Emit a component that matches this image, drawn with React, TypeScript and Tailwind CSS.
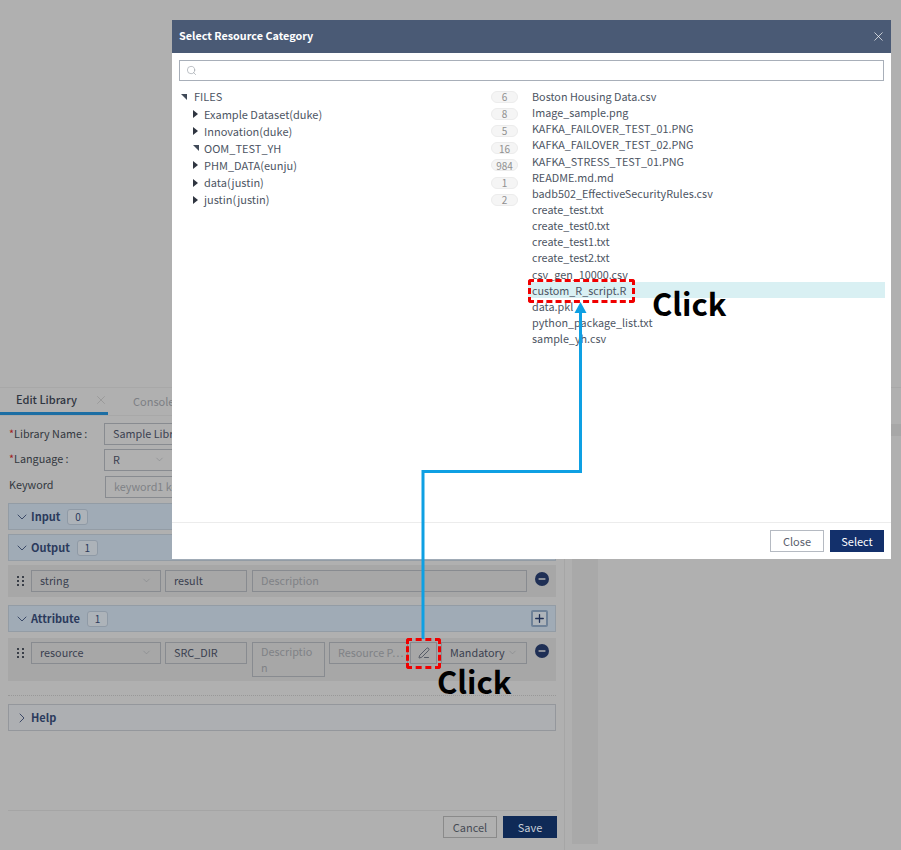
import { ChevronDown, ChevronRight, Minus, PenLine, Plus, Search, X } from 'lucide-react';

const TREE = [
  { name: 'FILES', count: '6', open: true, depth: 0 },
  { name: 'Example Dataset(duke)', count: '8', open: false, depth: 1 },
  { name: 'Innovation(duke)', count: '5', open: false, depth: 1 },
  { name: 'OOM_TEST_YH', count: '16', open: true, depth: 1 },
  { name: 'PHM_DATA(eunju)', count: '984', open: false, depth: 1 },
  { name: 'data(justin)', count: '1', open: false, depth: 1 },
  { name: 'justin(justin)', count: '2', open: false, depth: 1 },
];

const FILES = [
  'Boston Housing Data.csv',
  'Image_sample.png',
  'KAFKA_FAILOVER_TEST_01.PNG',
  'KAFKA_FAILOVER_TEST_02.PNG',
  'KAFKA_STRESS_TEST_01.PNG',
  'README.md.md',
  'badb502_EffectiveSecurityRules.csv',
  'create_test.txt',
  'create_test0.txt',
  'create_test1.txt',
  'create_test2.txt',
  'csv_gen_10000.csv',
  'custom_R_script.R',
  'data.pkl',
  'python_package_list.txt',
  'sample_yh.csv',
];

function Field({
  children,
  className = '',
  muted = false,
}: {
  children?: React.ReactNode;
  className?: string;
  muted?: boolean;
}) {
  return (
    <div
      className={`flex h-[22px] shrink-0 items-center overflow-hidden whitespace-nowrap border border-[#888b90] px-[8px] pb-[1px] text-[10.8px] ${
        muted ? 'text-[#7f8286]' : 'text-[#3b4150]'
      } ${className}`}
    >
      {children}
    </div>
  );
}

function SelectBox({ label, className = '' }: { label: string; className?: string }) {
  return (
    <Field className={`justify-between ${className}`}>
      <span>{label}</span>
      <ChevronDown size={11} strokeWidth={1.2} className="text-[#7f8286]" />
    </Field>
  );
}

function Section({
  title,
  count,
  open = true,
  withAdd = false,
}: {
  title: string;
  count?: string;
  open?: boolean;
  withAdd?: boolean;
}) {
  return (
    <div
      className={`flex h-[27px] items-center border pl-[5px] pr-[7px] ${
        open ? 'border-[#939ca5] bg-[#a0abb6]' : 'border-[#94979c] bg-[#adafb2]'
      }`}
    >
      {open ? (
        <ChevronDown size={16} strokeWidth={1.3} className="text-[#2b3a5c]" />
      ) : (
        <ChevronRight size={16} strokeWidth={1.3} className="text-[#2b3a5c]" />
      )}
      <span className="ml-[1px] text-[11px] font-bold text-[#2b3a5c]">{title}</span>
      {count && (
        <span className="ml-[7px] flex h-[16px] w-[21px] items-center justify-center rounded-[3px] border border-[#8f9aa6] bg-[#adb3b9] text-[10px] text-[#2b3a5c]">
          {count}
        </span>
      )}
      {withAdd && (
        <span className="ml-auto flex h-[17px] w-[17px] items-center justify-center rounded-[2px] border-2 border-[#6f8298] bg-[#aeb4ba]">
          <Plus size={13} strokeWidth={2.4} className="text-[#1f2f55]" />
        </span>
      )}
    </div>
  );
}

function RemoveButton() {
  return (
    <span className="flex h-[14px] w-[14px] shrink-0 items-center justify-center rounded-full bg-[#1f2f55]">
      <Minus size={10} strokeWidth={3.4} className="text-[#b0b0b0]" />
    </span>
  );
}

// Six-dot drag handle
function Grip({ className = '' }: { className?: string }) {
  return (
    <svg width="7" height="10" viewBox="0 0 7 10" className={`shrink-0 ${className}`} fill="#3a3f48">
      <rect x="0" y="0" width="2" height="2" />
      <rect x="5" y="0" width="2" height="2" />
      <rect x="0" y="4" width="2" height="2" />
      <rect x="5" y="4" width="2" height="2" />
      <rect x="0" y="8" width="2" height="2" />
      <rect x="5" y="8" width="2" height="2" />
    </svg>
  );
}

function ClickLabel({ className }: { className: string }) {
  return (
    <span className={`absolute text-[31px] font-bold leading-none text-black ${className}`}>Click</span>
  );
}

export default function App() {
  return (
    <div
      className="relative h-[850px] w-[901px] overflow-hidden bg-[#b0b0b0]"
      style={{ fontFamily: '"Noto Sans CJK KR", "Noto Sans", sans-serif' }}
    >
      {/* Dimmed page behind the dialog */}
      <div className="flex h-full pt-[387px]">
        <div className="flex h-[463px] w-[565px] shrink-0 flex-col border-r border-[#a6a6a6]">
          <div className="flex h-[29px] shrink-0 items-end border-b border-t border-[#a8a8a8] text-[11px]">
            <div className="flex h-[28px] w-[108px] items-center whitespace-nowrap border-b-[3px] border-[#1c6ea4] pl-[16px] font-medium text-[#2f3540]">
              Edit Library
              <X size={14} strokeWidth={1.1} className="ml-[17px] text-[#8e8e8e]" />
            </div>
            <div className="flex h-[28px] items-center pl-[25px] text-[#7c7f84]">Console</div>
          </div>

          <div className="flex flex-col pl-[9px] pr-[7px] pt-[7px] text-[10.8px] text-[#33383f]">
            <div className="flex h-[21px] items-center">
              <span className="w-[95px]">
                <span className="text-[#a02020]">*</span>Library Name :
              </span>
              <Field className="w-[200px]">Sample Library</Field>
            </div>
            <div className="mt-[5px] flex h-[21px] items-center">
              <span className="w-[95px] pb-[2px]">
                <span className="text-[#a02020]">*</span>Language :
              </span>
              <SelectBox label="R" className="w-[70px]" />
            </div>
            <div className="mt-[6px] flex h-[21px] items-center">
              <span className="w-[96px] pb-[4px]">Keyword</span>
              <Field muted className="w-[200px]">
                keyword1 keyword2
              </Field>
            </div>
          </div>

          <div className="flex flex-col px-[8px] pt-[6px]">
            <Section title="Input" count="0" />
            <div className="mt-[4px]">
              <Section title="Output" count="1" />
            </div>
            <div className="mt-[4px] flex h-[32px] items-center bg-[#a7a7a7] pl-[9px] pr-[9px]">
              <Grip className="mr-[7px]" />
              <SelectBox label="string" className="w-[130px]" />
              <Field className="ml-[4px] w-[82px]">result</Field>
              <Field muted className="ml-[5px] w-[275px]">
                Description
              </Field>
              <span className="-mt-[5px] ml-[8px]">
                <RemoveButton />
              </span>
            </div>

            <div className="mt-[8px]">
              <Section title="Attribute" count="1" withAdd />
            </div>
            <div className="mt-[6px] flex h-[43px] items-start bg-[#a7a7a7] pl-[9px] pr-[9px] pt-[4px]">
              <Grip className="mr-[7px] mt-[6px]" />
              <SelectBox label="resource" className="w-[130px]" />
              <Field className="ml-[4px] w-[82px]">SRC_DIR</Field>
              <Field muted className="ml-[5px] !h-[35px] w-[73px] !items-start !whitespace-normal break-all leading-[16px]">
                Description
              </Field>
              <Field muted className="ml-[4px] w-[79px] !pr-0">
                Resource P⋯
              </Field>
              <Field className="ml-[2px] w-[27px] justify-center !px-0">
                <PenLine size={12} strokeWidth={1.5} />
              </Field>
              <SelectBox label="Mandatory" className="ml-[4px] w-[86px]" />
              <span className="ml-[8px] mt-[2px]">
                <RemoveButton />
              </span>
            </div>

            <div className="mt-[14px] border-t border-dotted border-[#989898]" />
            <div className="mt-[8px]">
              <Section title="Help" open={false} />
            </div>
          </div>

          <div className="ml-[8px] mr-[7px] mt-[79px] flex justify-end gap-[6px] border-t border-[#a5a5a5] pt-[5px]">
            <button className="h-[22px] w-[54px] border border-[#8a8a8a] text-[11px] text-[#474c55]">Cancel</button>
            <button className="h-[22px] w-[54px] bg-[#0f2a57] text-[11px] text-[#c9ced6]">Save</button>
          </div>
        </div>
        <div className="ml-[7px] h-[457px] w-[26px] shrink-0 bg-[#a9a9a9]" />
        <div className="flex-1 border-t border-[#a8a8a8] pt-[36px]">
          <div className="h-[12px] bg-[#a7a7a7]" />
        </div>
      </div>

      {/* Select Resource Category dialog */}
      <div className="absolute left-[172px] top-[20px] flex h-[539px] w-[719px] flex-col bg-white">
        <div className="flex h-[33px] shrink-0 items-center justify-between bg-[#4a5a75] pl-[7px] pr-[5px]">
          <span className="pb-[2px] text-[10.8px] font-bold text-white">Select Resource Category</span>
          <X size={15} strokeWidth={1.1} className="text-white" />
        </div>

        <div className="mx-[7px] mt-[7px] flex h-[21px] items-center border border-[#a8afb9] pl-[6px]">
          <Search size={11} strokeWidth={1.4} className="text-[#9aa0a8]" />
        </div>

        <div className="flex min-h-0 flex-1 text-[#4d5563]">
          <div className="mt-[7px] w-[346px] shrink-0 pl-[9px] text-[11px]">
            {TREE.map((item) => (
              <div key={item.name} className="flex h-[17.2px] items-center">
                <span className={`flex justify-start ${item.depth ? 'ml-[12px] w-[11px]' : 'w-[13px]'}`}>
                  {item.open ? (
                    <span className="h-0 w-0 border-l-[6px] border-t-[6px] border-l-transparent border-t-[#414a58]" />
                  ) : (
                    <span className="h-0 w-0 border-y-[4.5px] border-l-[5px] border-y-transparent border-l-[#2f3540]" />
                  )}
                </span>
                <span className="whitespace-nowrap">{item.name}</span>
                <span className="ml-auto flex h-[12px] w-[27px] items-center justify-center rounded-full border border-[#ececec] bg-[#f5f5f5] text-[10px] text-[#909090]">
                  {item.count}
                </span>
              </div>
            ))}
          </div>

          <div className="ml-[10px] mt-[7px] flex-1 pr-[6px] text-[10.8px]">
            {FILES.map((file) => (
              <div
                key={file}
                className={`flex h-[16.15px] items-center whitespace-nowrap pl-[4px] ${
                  file === 'custom_R_script.R' ? 'bg-[#d9f0f3]' : ''
                }`}
              >
                {file}
              </div>
            ))}
          </div>
        </div>

        <div className="flex h-[37px] shrink-0 items-start justify-end gap-[6px] border-t border-[#ececec] pr-[7px] pt-[7px]">
          <button className="h-[22px] w-[54px] border border-[#b5bac2] text-[11px] text-[#59606c]">Close</button>
          <button className="h-[22px] w-[54px] bg-[#13306b] text-[11px] text-white">Select</button>
        </div>
      </div>

      {/* Tutorial annotations */}
      <svg className="pointer-events-none absolute left-0 top-0" width="901" height="850" fill="none">
        <path d="M423 639V471.5H580.5V313" stroke="#0ea0e3" strokeWidth="3" />
        <path d="M574.5 313L580.5 302L586.5 313Z" fill="#0ea0e3" />
      </svg>
      <div className="absolute left-[528px] top-[279px] h-[24px] w-[107px] rounded-[3px] border-[3px] border-dashed border-[#f00000]" />
      <div className="absolute left-[406px] top-[638px] h-[31px] w-[35px] rounded-[3px] border-[3px] border-dashed border-[#f00000]" />
      <ClickLabel className="left-[652px] top-[287px]" />
      <ClickLabel className="left-[437px] top-[665px]" />
    </div>
  );
}
